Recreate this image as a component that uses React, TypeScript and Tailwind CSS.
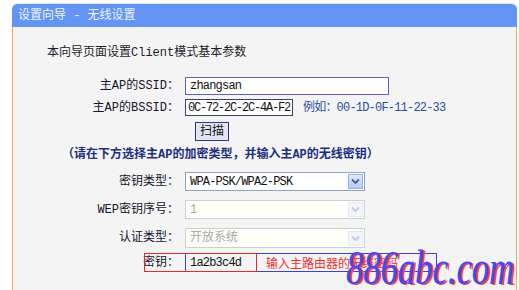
import type { ReactNode } from 'react'

const simsun = "font-['Liberation_Mono','Noto_Sans_CJK_SC',monospace]"

const Chevron = ({ disabled }: { disabled?: boolean }) => (
  <span
    className={
      disabled
        ? 'flex h-[15px] w-[15px] items-center justify-center border border-[#e3e9f5] bg-[#f1f4fb]'
        : 'flex h-[15px] w-[15px] items-center justify-center border border-[#98b1e3] bg-gradient-to-b from-[#dfe8fd] to-[#b8cbf4]'
    }
  >
    <svg width="9" height="7" viewBox="0 0 9 7">
      <path
        d="M1 1.5 L4.5 5 L8 1.5"
        fill="none"
        stroke={disabled ? '#c3cbdb' : '#4a5f8c'}
        strokeWidth="1.8"
      />
    </svg>
  </span>
)

const Select = ({ value, disabled }: { value: string; disabled?: boolean }) => (
  <div
    className={
      disabled
        ? 'flex h-full w-[180px] items-center justify-between border border-[#cfcfcf] bg-[#fffffa] pr-[1px] pl-[4px]'
        : 'flex h-full w-[180px] items-center justify-between border border-[#8fa3bd] bg-white pr-[1px] pl-[4px]'
    }
  >
    <span className={disabled ? 'text-[12px] text-[#a8a8a8]' : 'text-[12px] tracking-[-0.8px] text-[#111]'}>
      {value}
    </span>
    <Chevron disabled={disabled} />
  </div>
)

const Row = ({ label, className, children }: { label?: string; className: string; children: ReactNode }) => (
  <div className={`flex items-stretch ${className}`}>
    <div className="flex w-[166px] items-center justify-end text-[12px] text-[#15152e]">{label}</div>
    <div className="ml-[6px] flex items-stretch">{children}</div>
  </div>
)

export default function App() {
  return (
    <div className={`relative h-[290px] w-[519px] overflow-hidden bg-white pt-[3px] pl-[12px] ${simsun}`}>
      <div className="w-[505px]">
        {/* header bar */}
        <div className="flex h-[24px] items-center rounded-t-[6px] border-t border-[#dfe6f5] bg-[#6495f5] pl-[6px] text-[12px] text-[#eef3ff]">
          设置向导 - 无线设置
        </div>

        {/* body */}
        <div className="h-[270px] border-x border-[#f5a653] bg-[#f4f4f4]">
          <div className="pt-[19px] pl-[34px] text-[12px] leading-[14px] text-[#1c1c2c]">
            本向导页面设置Client模式基本参数
          </div>

          <Row label="主AP的SSID：" className="mt-[17px] h-[18px]">
            <div className="flex w-[204px] items-center border border-[#5e60c8] bg-white pl-[4px] text-[12px] tracking-[-0.8px] text-[#111]">
              zhangsan
            </div>
          </Row>

          <Row label="主AP的BSSID：" className="mt-[4px] h-[17px]">
            <div className="flex w-[108px] items-center border border-[#3d3d6e] bg-white pl-[2px] text-[12px] tracking-[-1.2px] text-[#111]">
              0C-72-2C-2C-4A-F2
            </div>
            <div className="ml-[10px] flex items-center text-[12px] tracking-[-0.8px] text-[#2a4f9c]">
              例如：00-1D-0F-11-22-33
            </div>
          </Row>

          <Row className="mt-[6px] h-[19px]">
            <button className="ml-[10px] flex w-[34px] items-center justify-center border border-[#2f3490] bg-[#e4e4f4] text-[12px] text-[#111]">
              扫描
            </button>
          </Row>

          <div className="mt-[7px] h-[14px] pl-[49px] text-[12px] leading-[14px] font-bold text-[#1d2f7c]">
            （请在下方选择主AP的加密类型，并输入主AP的无线密钥）
          </div>

          <Row label="密钥类型：" className="mt-[10px] h-[19px]">
            <Select value="WPA-PSK/WPA2-PSK" />
          </Row>

          <Row label="WEP密钥序号：" className="mt-[9px] h-[19px]">
            <Select value="1" disabled />
          </Row>

          <Row label="认证类型：" className="mt-[9px] h-[20px]">
            <Select value="开放系统" disabled />
          </Row>

          <Row label="密钥：" className="relative mt-[5px] h-[19px]">
            <div className="flex w-[252px] items-center border border-[#3f3fd0]">
              <span className="w-[70px] pl-[4px] text-[12px] tracking-[-0.8px] text-[#111]">1a2b3c4d</span>
              <span className="ml-[10px] font-['Noto_Sans_CJK_SC',sans-serif] text-[12px] text-[#ee3030]">
                输入主路由器的无线密码
              </span>
            </div>
            {/* red annotation box over label + value */}
            <span className="pointer-events-none absolute top-0 left-[131px] h-[19px] w-[113px] border-[1.5px] border-[#e52a2a]" />
          </Row>
        </div>
      </div>

      {/* site watermark */}
      <div className="pointer-events-none absolute top-[244px] left-[346px] origin-left scale-x-[0.72] font-['Liberation_Serif',serif] text-[48px] leading-none text-[#3d4cff] italic [text-shadow:3px_1px_0_#ff4040]">
        886abc.com
      </div>
    </div>
  )
}
